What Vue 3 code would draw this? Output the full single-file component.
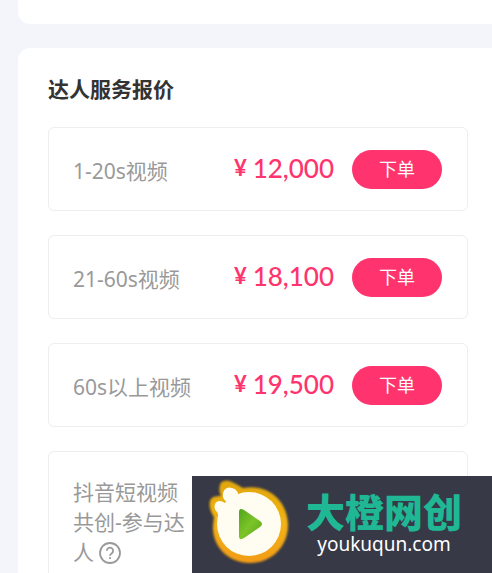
<template>
  <div class="page">
    <section class="panel panel-top"></section>

    <!-- 报价列表 -->
    <section class="panel">
      <h2 class="title">达人服务报价</h2>
      <ul class="price-list">
        <li v-for="item in services" :key="item.name" class="price-item">
          <div class="name">
            {{ item.name }}
            <button v-if="item.help" type="button" class="help" aria-label="说明">
              <svg viewBox="0 0 22 22" width="22" height="22" fill="none" stroke="currentColor">
                <circle cx="11" cy="11" r="10" stroke-width="1.8" />
                <path d="M7.9 8.8a3.1 3.1 0 1 1 4.7 2.6c-1.1.7-1.6 1.2-1.6 2.3" stroke-width="1.8" />
                <circle cx="11" cy="16" r="1.1" fill="currentColor" stroke="none" />
              </svg>
            </button>
          </div>
          <div class="price"><span class="unit">¥</span>{{ formatPrice(item.price) }}</div>
          <button type="button" class="order-btn">下单</button>
        </li>
      </ul>
    </section>

    <!-- 右下角站点标识 -->
    <aside class="brand">
      <svg class="brand-logo" viewBox="0 0 100 97" width="100" height="97">
        <defs>
          <linearGradient id="ring" x1="0" y1="0" x2="0" y2="1">
            <stop offset="0" stop-color="#e0a60c" />
            <stop offset="0.5" stop-color="#f2b313" />
            <stop offset="1" stop-color="#f39c12" />
          </linearGradient>
          <linearGradient id="play" x1="0" y1="0" x2="1" y2="1">
            <stop offset="0" stop-color="#4fa51d" />
            <stop offset="0.5" stop-color="#7cc428" />
            <stop offset="1" stop-color="#56a51c" />
          </linearGradient>
          <filter id="soft" x="-10%" y="-10%" width="120%" height="120%">
            <feGaussianBlur stdDeviation="0.8" />
          </filter>
        </defs>
        <path
          d="M28 9C29 4 36 4 40 6C45 8 49 11 51 12C77 7 96 26 96 49C96 71 79 87 58 87C36 87 20 70 21 50L22 41C18 35 16 27 19 23C21 20 26 20 29 20C27 16 27 12 28 9Z"
          fill="url(#ring)"
          filter="url(#soft)"
        />
        <circle cx="57" cy="48" r="32" fill="#fffdf2" />
        <path
          d="M31 21C30 14 35 10 40 12C44 13 46 16 46 18L57 20L40 40L26 44C27 40 26 38 25 36C21 32 22 26 27 25C30 25 33 26 34 29C36 25 32 25 31 21Z"
          fill="#fffdf2"
        />
        <path
          d="M47 36Q47 31 52 34L68 45Q72 48 68 51L52 62Q47 65 47 60Z"
          fill="url(#play)"
        />
      </svg>
      <div class="brand-text">
        <strong class="brand-name">大橙网创</strong>
        <span class="brand-url">youkuqun.com</span>
      </div>
    </aside>
  </div>
</template>

<script setup>
import { ref } from 'vue'

const services = ref([
  { name: '1-20s视频', price: 12000 },
  { name: '21-60s视频', price: 18100 },
  { name: '60s以上视频', price: 19500 },
  { name: '抖音短视频共创-参与达人', price: 20000, help: true },
])

// 千分位
const formatPrice = (price) => price.toLocaleString('en-US')
</script>

<style>
body {
  margin: 0;
  background: #f4f5fa;
}
</style>

<style scoped>
.page {
  height: 100vh;
  overflow: hidden;
  padding-left: 18px;
  box-sizing: border-box;
  background: #f4f5fa;
  font-family: "Noto Sans", "Noto Sans CJK SC", sans-serif;
}

.panel {
  padding: 24px 24px 30px 30px;
  border-radius: 12px 0 0 12px;
  background: #fff;
}

.panel-top {
  margin-bottom: 24px;
  padding: 12px;
  border-radius: 0 0 0 12px;
}

.title {
  margin: 0 0 23px;
  color: #333;
  font-family: "Noto Sans CJK SC", sans-serif;
  font-size: 21px;
  font-weight: 700;
  line-height: 32px;
}

.price-list {
  display: flex;
  flex-direction: column;
  gap: 24px;
  margin: 0;
  padding: 0;
  list-style: none;
}

.price-item {
  display: flex;
  align-items: center;
  min-height: 84px;
  padding: 21px 25px 21px 24px;
  box-sizing: border-box;
  border: 1px solid #eee;
  border-radius: 6px;
}

.name {
  flex: 0 1 120px;
  padding-top: 4px;
  color: #999;
  font-size: 21px;
  line-height: 30px;
}

.help {
  display: inline-flex;
  padding: 0 0 2px;
  border: none;
  background: none;
  color: #999;
  vertical-align: middle;
}

.price {
  display: flex;
  flex: 1;
  align-items: center;
  justify-content: flex-end;
  gap: 6px;
  padding-bottom: 2px;
  color: #ff346e;
  font-family: Lato, sans-serif;
  font-size: 26px;
  font-weight: 500;
  line-height: 34px;
  white-space: nowrap;
}

.unit {
  font-size: 22px;
  font-weight: 700;
}

.order-btn {
  width: 90px;
  height: 39px;
  margin-left: 18px;
  padding: 0 0 2px;
  border: none;
  border-radius: 20px;
  background: #ff346e;
  color: #fff;
  font-family: "Noto Sans CJK SC", sans-serif;
  font-size: 18px;
  font-weight: 400;
  cursor: pointer;
}

.brand {
  position: fixed;
  right: 0;
  bottom: 0;
  display: flex;
  width: 300px;
  height: 97px;
  background: #373947;
}

.brand-text {
  display: flex;
  flex-direction: column;
  align-items: center;
  padding: 14px 0 0 14px;
}

.brand-name {
  color: #20b795;
  font-family: "Noto Sans CJK SC", sans-serif;
  font-size: 39px;
  font-weight: 900;
  line-height: 40px;
}

.brand-url {
  color: #fff;
  font-size: 19px;
  line-height: 28px;
}
</style>
